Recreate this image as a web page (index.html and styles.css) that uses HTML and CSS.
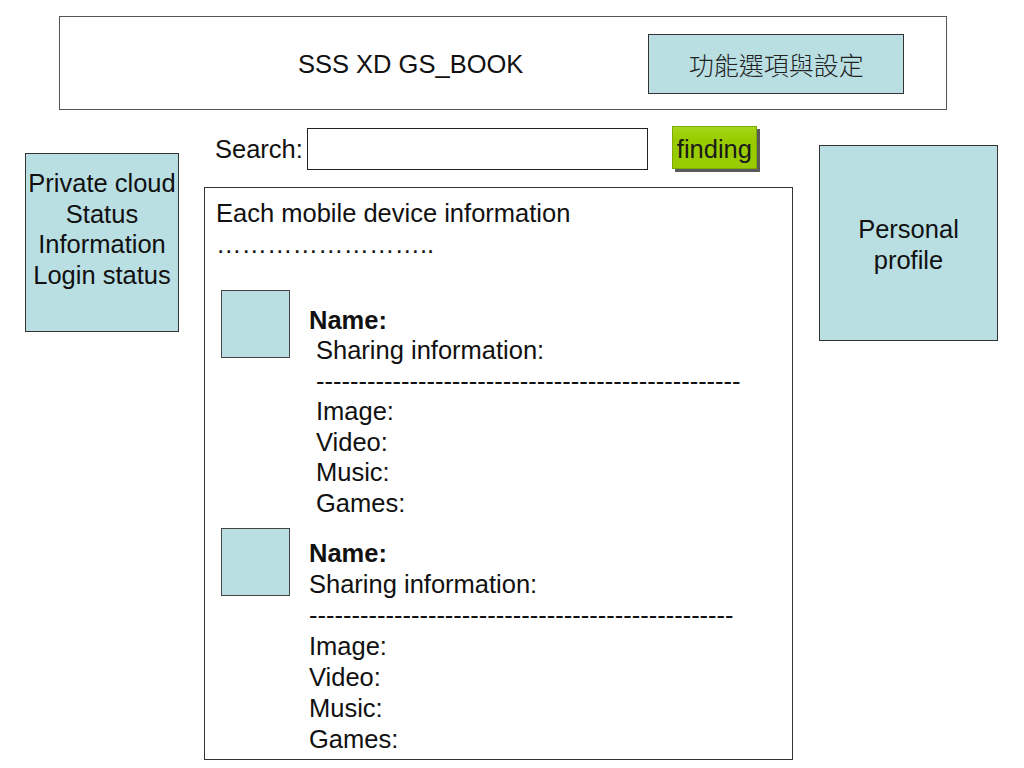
FILE: index.html
```html
<!DOCTYPE html>
<html lang="en">
<head>
    <meta charset="UTF-8">
    <meta name="viewport" content="width=device-width, initial-scale=1.0">
    <title>SSS XD GS_BOOK</title>
    <link rel="stylesheet" href="styles.css">
</head>
<body>

    <div class="page">
        <div class="header">
            <span class="title">SSS XD GS_BOOK</span>
            <button class="settings-btn">功能選項與設定</button>
        </div>

        <div class="main">
            <div class="side-panel status-panel">
                Private cloud<br>
                Status<br>
                Information<br>
                Login status
            </div>

            <div class="center">
                <div class="search-row">
                    <label class="search-label" for="search">Search:</label>
                    <input type="text" id="search" class="search-input">
                    <button class="finding-btn">finding</button>
                </div>

                <div class="device-list">
                    <div class="list-title">Each mobile device information</div>
                    <div class="list-title">……………………..</div>

                    <div class="device">
                        <div class="device-thumb"></div>
                        <div class="device-info">
                            <div class="device-name">Name:</div>
                            <div class="indent">Sharing information:</div>
                            <div class="indent">--------------------------------------------------</div>
                            <div class="indent">Image:</div>
                            <div class="indent">Video:</div>
                            <div class="indent">Music:</div>
                            <div class="indent">Games:</div>
                        </div>
                    </div>

                    <div class="device device-second">
                        <div class="device-thumb"></div>
                        <div class="device-info">
                            <div class="device-name">Name:</div>
                            <div>Sharing information:</div>
                            <div>--------------------------------------------------</div>
                            <div>Image:</div>
                            <div>Video:</div>
                            <div>Music:</div>
                            <div>Games:</div>
                        </div>
                    </div>
                </div>
            </div>

            <div class="side-panel profile-panel">
                Personal<br>
                profile
            </div>
        </div>
    </div>

</body>
</html>
```

FILE: styles.css
```css
body {
    margin: 0;
    font-family: 'Liberation Sans', Arial, sans-serif;
    font-size: 25.5px;
    color: #111;
    background: #ffffff;
}

.page {
    width: 1024px;
    height: 768px;
    padding-left: 25px;
    box-sizing: border-box;
    overflow: hidden;
}

.header {
    margin: 16px 0 0 34px;
    width: 888px;
    height: 94px;
    box-sizing: border-box;
    border: 1px solid #555;
    display: flex;
    align-items: center;
    padding-left: 238px;
}

.title {
    margin-top: 3px;
}

.settings-btn {
    margin-left: 125px;
    width: 256px;
    height: 60px;
    background-color: #b9dfe3; /* light blue box */
    border: 1px solid #333;
    font-family: 'Noto Sans CJK TC', sans-serif;
    font-size: 25px;
    font-weight: 300;
    color: #222;
    padding: 0;
    margin-top: 1px;
}

.main {
    display: grid;
    grid-template-columns: 154px 589px 180px;
    column-gap: 25px;
    align-items: start;
}

.side-panel {
    background-color: #b9dfe3;
    border: 1px solid #333;
    box-sizing: border-box;
    text-align: center;
    line-height: 30.5px;
}

.status-panel {
    margin-top: 43px;
    height: 179px;
    padding-top: 14px;
    white-space: nowrap;
}

.profile-panel {
    margin-top: 35px;
    margin-left: 1px;
    width: 179px;
    height: 196px;
    padding-top: 68px;
}

.search-row {
    display: flex;
    align-items: center;
    margin-top: 16px;
    padding-left: 11px;
    height: 46px;
}

.search-label {
    margin-right: 4px;
}

.search-input {
    width: 341px;
    height: 42px;
    box-sizing: border-box;
    border: 1px solid #222;
    padding: 0;
    outline: none;
}

.finding-btn {
    margin-left: 24px;
    width: 85px;
    height: 43px;
    padding: 0;
    background: linear-gradient(#a6d61a, #99cc00 30%);
    border: 1px solid #7fa800;
    box-shadow: 3px 3px 0 #5a5a5a; /* raised look */
    font-family: 'Liberation Sans', Arial, sans-serif;
    font-size: 25.5px;
    color: #1a1a1a;
    padding-top: 3px;
    margin-top: -3px;
}

.device-list {
    margin-top: 15px;
    height: 573px;
    box-sizing: border-box;
    border: 1px solid #333;
    padding: 10px 11px 0;
    line-height: 30.5px;
}

.device {
    display: flex;
    align-items: flex-start;
    margin: 30.5px 0 0 5px;
}

.device-thumb {
    width: 69px;
    height: 68px;
    box-sizing: border-box;
    background-color: #b9dfe3;
    border: 1px solid #444;
    flex-shrink: 0;
}

.device-info {
    margin-left: 19px;
    padding-top: 15px;
}

.device-name {
    font-weight: bold;
}

.indent {
    padding-left: 7px;
}

.device-second {
    margin-top: 9.5px;
    line-height: 31px;
}

.device-second .device-info {
    padding-top: 10px;
}
```
